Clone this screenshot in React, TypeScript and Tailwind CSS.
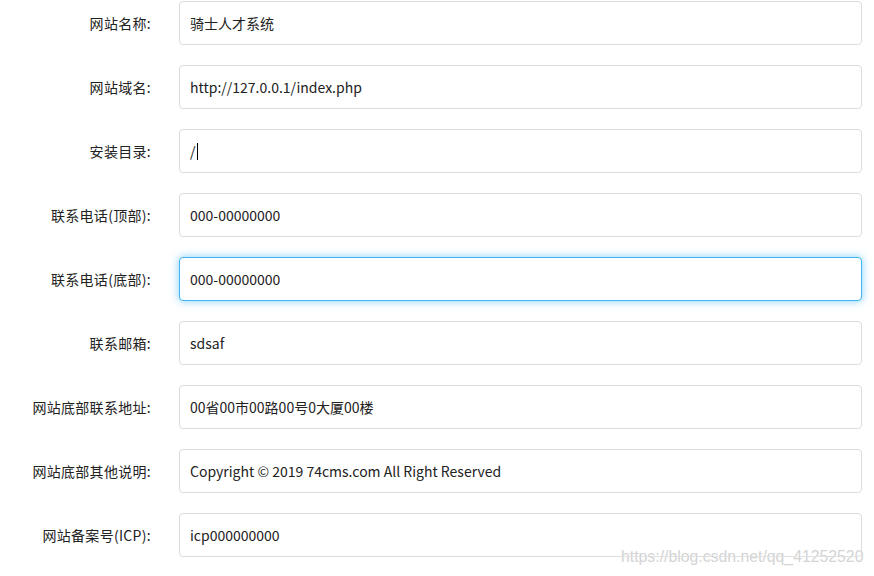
import React from "react";

const rows: { label: string; value: string; focus?: boolean }[] = [
  { label: "网站名称:", value: "骑士人才系统" },
  { label: "网站域名:", value: "http://127.0.0.1/index.php" },
  { label: "安装目录:", value: "/" },
  { label: "联系电话(顶部):", value: "000-00000000" },
  { label: "联系电话(底部):", value: "000-00000000", focus: true },
  { label: "联系邮箱:", value: "sdsaf" },
  { label: "网站底部联系地址:", value: "00省00市00路00号0大厦00楼" },
  { label: "网站底部其他说明:", value: "Copyright © 2019 74cms.com All Right Reserved" },
  { label: "网站备案号(ICP):", value: "icp000000000" },
];

export default function App() {
  return (
    <div
      className="relative w-[874px] h-[576px] overflow-hidden bg-white text-[14px] text-[#222]"
      style={{ fontFamily: '"Noto Sans CJK SC", "Noto Sans", sans-serif' }}
    >
      <div className="flex flex-col gap-[20px] pt-[1px]">
        {rows.map((r, i) => (
          <div key={i} className="flex items-center h-[44px]">
            <div className="w-[152px] text-right pr-[1px] shrink-0 tracking-[0.3px]">{r.label}</div>
            <div
              className={
                "ml-[27px] w-[683px] h-[44px] rounded-[4px] border bg-white flex items-center pl-[10px] text-[14px] " +
                (r.focus
                  ? "border-[#3fb6f2] shadow-[0_0_8px_rgba(60,180,250,0.65)]"
                  : "border-[#dcdcdc]")
              }
            >
              <span>{r.value}</span>
              {i === 2 && <span className="inline-block w-[1px] h-[17px] bg-black ml-[1px]" />}
            </div>
          </div>
        ))}
      </div>
      <div
        className="absolute left-[621px] top-[545px] text-[15.8px] text-[#d4d4d4]"
        style={{ fontFamily: '"Liberation Sans", Arial, sans-serif', textShadow: "0 0 1px #fff, 0 0 2px #fff" }}
      >
        https://blog.csdn.net/qq_41252520
      </div>
    </div>
  );
}
